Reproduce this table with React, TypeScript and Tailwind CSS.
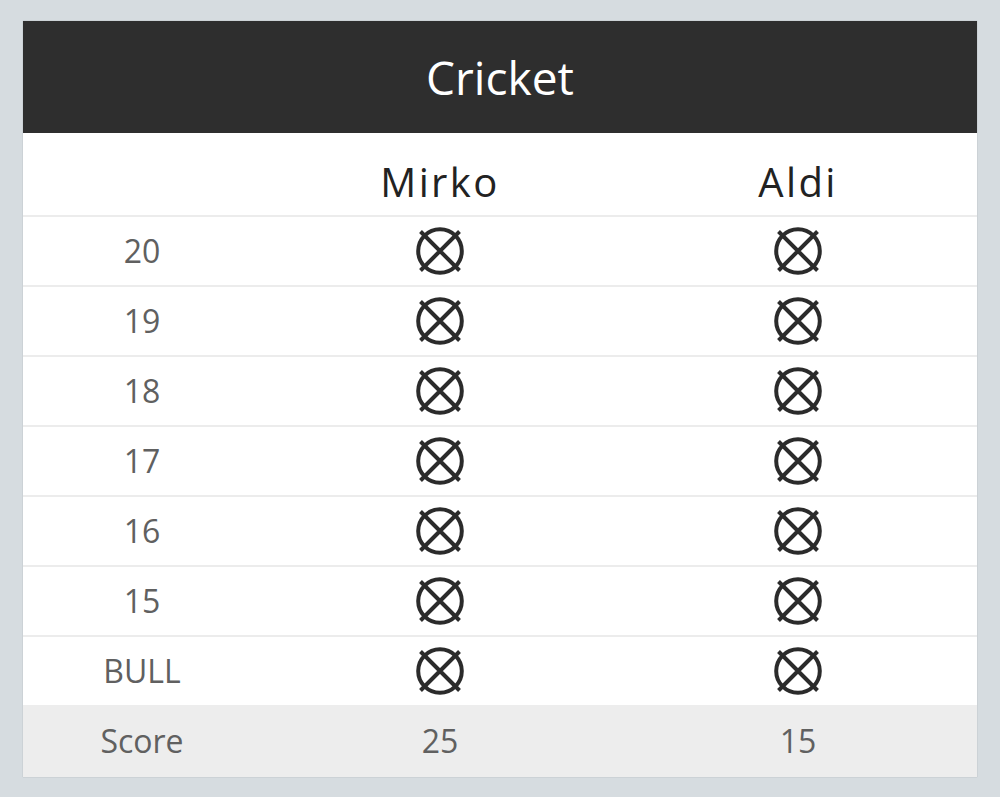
import React from "react";

const rows = ["20", "19", "18", "17", "16", "15", "BULL"];

const players = [
  { name: "Mirko", score: 25 },
  { name: "Aldi", score: 15 },
];

function ClosedMark() {
  return (
    <svg width="48" height="48" viewBox="0 0 48 48" fill="none">
      <circle cx="24" cy="24" r="21.8" stroke="#2b2b2b" strokeWidth="4" />
      <path d="M4.5 4.5 L43.5 43.5 M43.5 4.5 L4.5 43.5" stroke="#2b2b2b" strokeWidth="4" />
    </svg>
  );
}

export default function App() {
  return (
    <div
      className="w-[1000px] h-[797px] bg-[#d6dce0] pt-[21px] px-[23px]"
      style={{ fontFamily: '"Open Sans", "Liberation Sans", sans-serif' }}
    >
      <div className="bg-white shadow-[0_0_1px_rgba(0,0,0,0.25)]">
        <div className="h-[112px] bg-[#2e2e2e] flex items-center justify-center">
          <span className="text-[46px] text-white leading-none">Cricket</span>
        </div>

        <div className="grid grid-cols-[238px_358px_358px] h-[84px] border-b-2 border-[#ececec]">
          <div />
          {players.map((p) => (
            <div
              key={p.name}
              className="flex items-center justify-center pt-4 text-[40px] leading-none tracking-[0.06em] text-[#222]"
            >
              {p.name}
            </div>
          ))}
        </div>

        {rows.map((label, i) => (
          <div
            key={label}
            className={
              i < rows.length - 1
                ? "grid grid-cols-[238px_358px_358px] h-[70px] border-b-2 border-[#ececec]"
                : "grid grid-cols-[238px_358px_358px] h-[68px]"
            }
          >
            <div className="flex items-center justify-center text-[32px] leading-none text-[#606060]">
              {label}
            </div>
            {players.map((p) => (
              <div key={p.name} className="flex items-center justify-center">
                <ClosedMark />
              </div>
            ))}
          </div>
        ))}

        <div className="grid grid-cols-[238px_358px_358px] h-[72px] bg-[#ededed]">
          <div className="flex items-center justify-center text-[32px] leading-none text-[#606060]">
            Score
          </div>
          {players.map((p) => (
            <div
              key={p.name}
              className="flex items-center justify-center text-[32px] leading-none text-[#606060]"
            >
              {p.score}
            </div>
          ))}
        </div>
      </div>
    </div>
  );
}
